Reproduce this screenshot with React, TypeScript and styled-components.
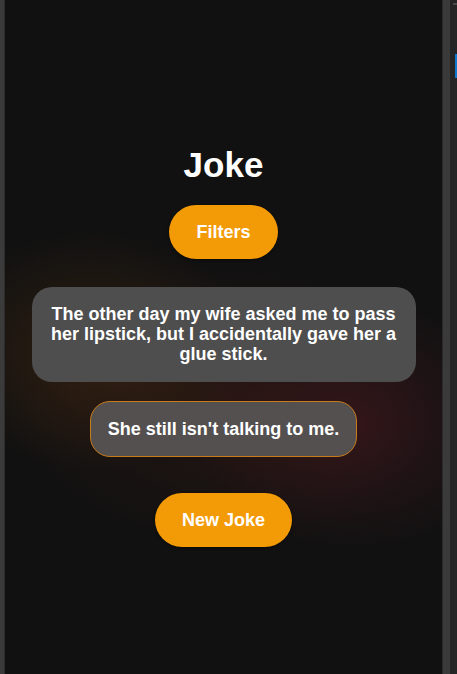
import React, { useState } from "react";
import styled, { createGlobalStyle } from "styled-components";

const GlobalStyle = createGlobalStyle`
  html, body {
    margin: 0;
    padding: 0;
    height: 100%;
    background: #111111;
  }
  #root {
    height: 100%;
  }
  * {
    box-sizing: border-box;
  }
`;

const Frame = styled.div`
  display: flex;
  height: 100vh;
  width: 100%;
  overflow: hidden;
  font-family: "Liberation Sans", Arial, sans-serif;
`;

const LeftEdge = styled.div`
  width: 5px;
  flex: none;
  background: #3b3b3b;
  border-right: 1px solid #2c2c2c;
`;

const Stage = styled.main`
  flex: 1;
  display: flex;
  flex-direction: column;
  align-items: center;
  padding-top: 145px;
  background-color: #111111;
  background-image:
    radial-gradient(ellipse 210px 160px at 20% 52%, rgba(120, 65, 15, 0.28), transparent 75%),
    radial-gradient(ellipse 220px 170px at 80% 63%, rgba(120, 30, 45, 0.28), transparent 75%),
    radial-gradient(ellipse 270px 180px at 50% 60%, rgba(75, 30, 20, 0.32), transparent 80%);
`;

const Divider = styled.div`
  width: 8px;
  flex: none;
  background: #3a3a3a;
  border-left: 1px solid #2a2a2a;
`;

const SidePane = styled.aside`
  width: 7px;
  flex: none;
  background: #252526;
  display: flex;
  flex-direction: column;
  align-items: flex-end;
`;

const SideTick = styled.div`
  width: 4px;
  height: 2px;
  margin-top: 3px;
  background: #4a4a4a;
`;

const SideMarker = styled.div`
  width: 2px;
  height: 24px;
  margin-top: 49px;
  background: #0e78d0;
`;

const Title = styled.h1`
  margin: 0;
  font-size: 35px;
  font-weight: 700;
  color: #ffffff;
`;

const PillButton = styled.button<{ $offset: number }>`
  margin-top: ${(p) => p.$offset}px;
  border: none;
  border-radius: 999px;
  padding: 16px 27px;
  background: #f39a07;
  color: #ffffff;
  font-family: inherit;
  font-size: 18px;
  font-weight: 700;
  line-height: 22px;
  cursor: pointer;
  box-shadow: 0 1px 3px rgba(0, 0, 0, 0.45);
`;

const SetupCard = styled.div`
  margin-top: 28px;
  width: 384px;
  padding: 17px 18px 18px;
  border-radius: 20px;
  background: #4e4e4e;
  color: #ffffff;
  font-size: 18px;
  font-weight: 700;
  line-height: 20px;
  text-align: center;
`;

const PunchlineCard = styled.div`
  margin-top: 19px;
  padding: 17px 17px 16px;
  border-radius: 20px;
  border: 1px solid #c77b1a;
  background: #545050;
  color: #ffffff;
  font-size: 18px;
  font-weight: 700;
  line-height: 21px;
  text-align: center;
`;

const jokes = [
  {
    setup:
      "The other day my wife asked me to pass her lipstick, but I accidentally gave her a glue stick.",
    punchline: "She still isn't talking to me.",
  },
];

export default function App() {
  const [index, setIndex] = useState(0);
  const joke = jokes[index % jokes.length];

  return (
    <>
      <GlobalStyle />
      <Frame>
        <LeftEdge />
        <Stage>
          <Title>Joke</Title>
          <PillButton $offset={20}>Filters</PillButton>
          <SetupCard>{joke.setup}</SetupCard>
          <PunchlineCard>{joke.punchline}</PunchlineCard>
          <PillButton $offset={36} onClick={() => setIndex((i) => i + 1)}>
            New Joke
          </PillButton>
        </Stage>
        <Divider />
        <SidePane>
          <SideTick />
          <SideMarker />
        </SidePane>
      </Frame>
    </>
  );
}
